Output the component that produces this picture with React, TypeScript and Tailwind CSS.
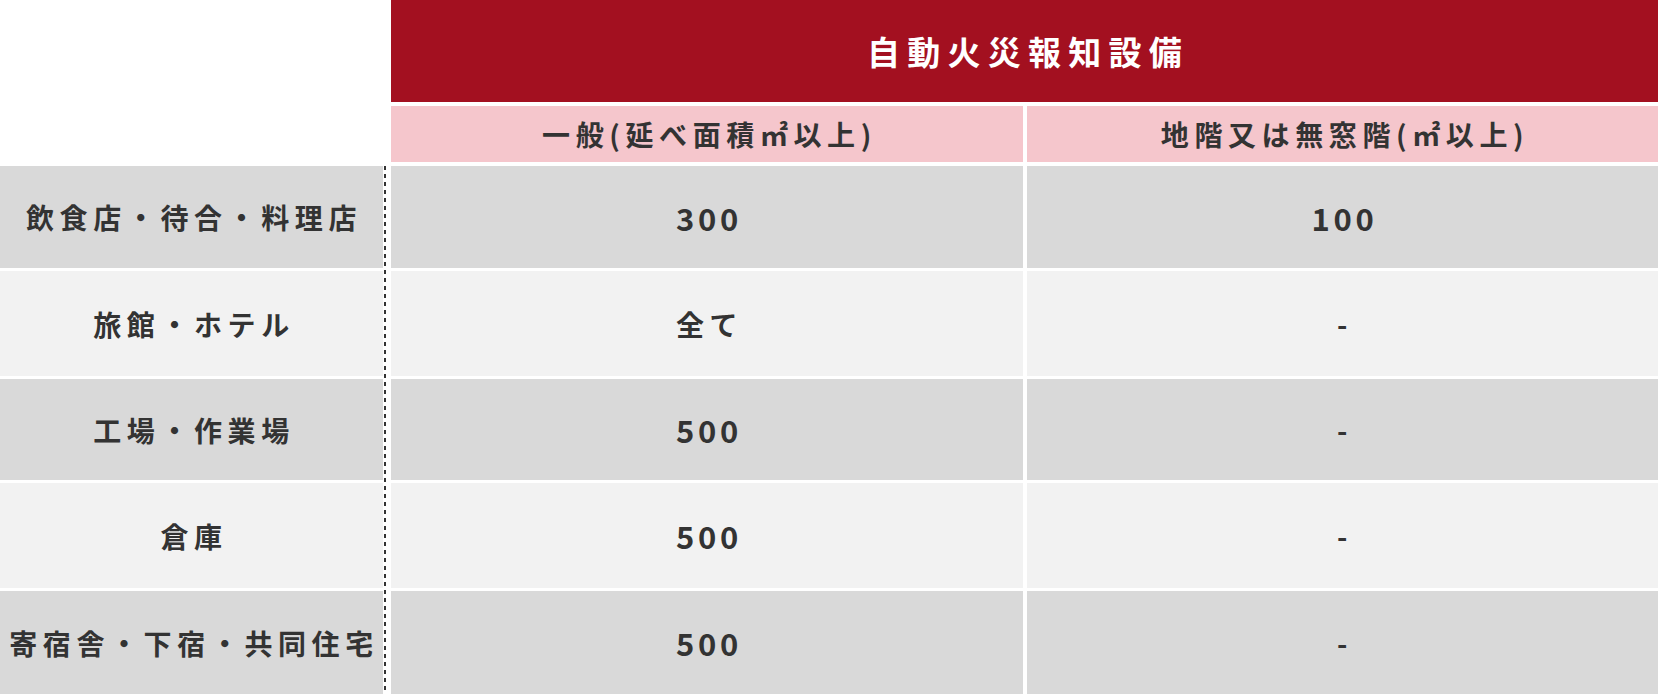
import React from 'react';

type Row = { label: string; general: string; basement: string; h: string; shade: 'dark' | 'light' };

const ROWS: Row[] = [
  { label: '飲食店・待合・料理店', general: '300', basement: '100', h: 'h-[102px]', shade: 'dark' },
  { label: '旅館・ホテル', general: '全て', basement: '-', h: 'h-[105px]', shade: 'light' },
  { label: '工場・作業場', general: '500', basement: '-', h: 'h-[101px]', shade: 'dark' },
  { label: '倉庫', general: '500', basement: '-', h: 'h-[105px]', shade: 'light' },
  { label: '寄宿舎・下宿・共同住宅', general: '500', basement: '-', h: 'h-[103px]', shade: 'dark' },
];

const cellText = 'text-[28px] font-bold tracking-[0.2em] text-[#333] leading-none';
const numText = 'text-[31px] font-bold tracking-[0.12em] text-[#333] leading-none';

const isNum = (v: string) => /^[0-9]+$/.test(v);

export default function App() {
  return (
    <div className="w-[1660px] h-[694px] bg-white overflow-hidden font-['Noto_Sans_CJK_JP','Noto_Sans',sans-serif]">
      {/* header */}
      <div className="flex">
        <div className="w-[391px] shrink-0" />
        <div className="w-[1267px] flex flex-col gap-[4px]">
          <div className="h-[102px] bg-[#a31020] flex items-center justify-center">
            <span className="text-[33px] font-bold tracking-[0.22em] text-white leading-none pl-[7px]">自動火災報知設備</span>
          </div>
          <div className="h-[56px] flex gap-[4px]">
            <div className="w-[632px] bg-[#f5c6cc] flex items-center justify-center">
              <span className={cellText + ' pl-[5px]'}>一般(延べ面積㎡以上)</span>
            </div>
            <div className="w-[631px] bg-[#f5c6cc] flex items-center justify-center">
              <span className={cellText + ' pl-[5px]'}>地階又は無窓階(㎡以上)</span>
            </div>
          </div>
        </div>
      </div>

      {/* body */}
      <div className="flex mt-[4px]">
        <div className="w-[383px] shrink-0 flex flex-col gap-[3px]">
          {ROWS.map(r => (
            <div key={r.label} className={`${r.h} ${r.shade === 'dark' ? 'bg-[#d9d9d9]' : 'bg-[#f2f2f2]'} flex items-center justify-center`}>
              <span className={cellText + ' pl-[5px] whitespace-nowrap'}>{r.label}</span>
            </div>
          ))}
        </div>
        <div className="w-[8px] shrink-0 pl-[1px]">
          <div className="w-[2px] h-full bg-[repeating-linear-gradient(to_bottom,#333_0px,#333_4px,transparent_4px,transparent_8px)]" />
        </div>
        <div className="w-[1267px] flex flex-col gap-[3px]">
          {ROWS.map(r => (
            <div key={r.label} className={`${r.h} flex gap-[4px]`}>
              <div className={`w-[632px] ${r.shade === 'dark' ? 'bg-[#d9d9d9]' : 'bg-[#f2f2f2]'} flex items-center justify-center`}>
                <span className={isNum(r.general) ? numText + ' pl-[4px]' : cellText + ' pl-[5px]'}>{r.general}</span>
              </div>
              <div className={`w-[631px] ${r.shade === 'dark' ? 'bg-[#d9d9d9]' : 'bg-[#f2f2f2]'} flex items-center justify-center`}>
                <span className={isNum(r.basement) ? numText + ' pl-[4px]' : cellText + ' pl-[5px]'}>{r.basement}</span>
              </div>
            </div>
          ))}
        </div>
      </div>
    </div>
  );
}
